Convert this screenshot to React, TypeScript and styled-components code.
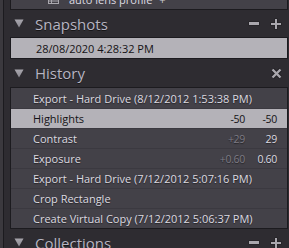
import React from "react";
import styled, { createGlobalStyle } from "styled-components";

const GlobalStyle = createGlobalStyle`
  html, body { margin: 0; padding: 0; background: #3b393e; }
  body { font-family: "Open Sans", "Noto Sans", sans-serif; width: 289px; height: 248px; overflow: hidden; }
`;

const Panel = styled.div`
  margin-left: 3px;
  border-left: 1px solid #1c1b1f;
  background: #2e2c31;
  height: 248px;
  overflow: hidden;
  padding: 0 1px 0 6px;
  display: flex;
  flex-direction: column;
`;

const Box = styled.div<{ $top?: number }>`
  background: #434148;
  border: 1px solid #1c1b1f;
  margin-top: ${(p) => p.$top ?? 0}px;
  display: flex;
  flex-direction: column;
`;

const Header = styled.div<{ $h: number }>`
  height: ${(p) => p.$h}px;
  display: flex;
  align-items: center;
  padding: 0 6px 0 4px;
  flex-shrink: 0;
`;

const Title = styled.span`
  margin-left: 11px;
  font-size: 15px;
  color: #b7b5c2;
  flex: 1;
  text-shadow: 0 1px 0 rgba(0, 0, 0, 0.5);
`;

const Tools = styled.div`
  display: flex;
  align-items: center;
  gap: 10px;
`;

const Row = styled.div<{ $sel?: boolean; $pad?: number }>`
  height: 20px;
  box-sizing: border-box;
  display: grid;
  grid-template-columns: 1fr 40px 32px;
  align-items: center;
  padding: 0 10px 0 ${(p) => p.$pad ?? 22}px;
  font-size: 11px;
  background: ${(p) => (p.$sel ? "#b4b2b8" : "transparent")};
  color: ${(p) => (p.$sel ? "#141216" : "#dcdae0")};
  text-shadow: ${(p) => (p.$sel ? "none" : "0 1px 1px rgba(0,0,0,0.45)")};
  & + & {
    border-top: 1px solid #3b3940;
  }
`;

const Label = styled.span`
  white-space: nowrap;
`;

const Val = styled.span<{ $dim?: boolean }>`
  text-align: right;
  font-size: 10.5px;
  letter-spacing: -0.3px;
  color: ${(p) => (p.$dim ? "#7d7b84" : "inherit")};
`;

const SnapBox = styled(Box)`
  background: #b4b2b8;
`;

const SnapRow = styled.div`
  height: 20px;
  display: flex;
  align-items: center;
  padding-left: 25px;
  font-size: 11px;
  color: #141216;
`;

const PresetRow = styled.div`
  height: 19px;
  display: flex;
  align-items: center;
  padding-left: 37px;
  font-size: 11px;
  color: #dcdae0;
  gap: 10px;
`;

const Plus2 = styled.span`
  margin-left: 7px;
  color: #c9c7cd;
`;

const Triangle = () => (
  <svg width="10" height="9" viewBox="0 0 10 9">
    <defs>
      <linearGradient id="tg" x1="0" y1="0" x2="0" y2="1">
        <stop offset="0" stopColor="#a9a7ae" />
        <stop offset="1" stopColor="#8a8890" />
      </linearGradient>
    </defs>
    <path d="M0.5 0.5 L9.5 0.5 L5 8.5 Z" fill="url(#tg)" />
  </svg>
);

const Minus = () => (
  <svg width="12" height="5" viewBox="0 0 12 5">
    <rect x="0.5" y="0.5" width="11" height="4" fill="#1e1d21" />
    <rect x="1" y="1" width="10" height="3" fill="#a9a7ad" />
  </svg>
);

const Plus = () => (
  <svg width="12" height="12" viewBox="0 0 12 12">
    <path d="M4.5 0.5h3v4h4v3h-4v4h-3v-4h-4v-3h4z" fill="#1e1d21" />
    <path d="M5 1h2v4h4v2h-4v4h-2v-4h-4v-2h4z" fill="#a9a7ad" />
  </svg>
);

const Close = () => (
  <svg width="11" height="11" viewBox="0 0 11 11">
    <path d="M1.5 1.5 L9.5 9.5 M9.5 1.5 L1.5 9.5" stroke="#1e1d21" strokeWidth="4" />
    <path d="M1.5 1.5 L9.5 9.5 M9.5 1.5 L1.5 9.5" stroke="#a9a7ad" strokeWidth="2.4" />
  </svg>
);

const PresetIcon = () => (
  <svg width="11" height="9" viewBox="0 0 11 9">
    <rect x="0.5" y="0.5" width="10" height="8" fill="none" stroke="#aaa8ae" />
    <path d="M0.5 3.5h10M0.5 6h10M3.5 0.5v8" stroke="#aaa8ae" />
  </svg>
);

const history: { label: string; a?: string; b?: string; sel?: boolean }[] = [
  { label: "Export - Hard Drive (8/12/2012 1:53:38 PM)" },
  { label: "Highlights", a: "-50", b: "-50", sel: true },
  { label: "Contrast", a: "+29", b: "29" },
  { label: "Exposure", a: "+0.60", b: "0.60" },
  { label: "Export - Hard Drive (7/12/2012 5:07:16 PM)" },
  { label: "Crop Rectangle" },
  { label: "Create Virtual Copy (7/12/2012 5:06:37 PM)" },
];

export default function App() {
  return (
    <>
      <GlobalStyle />
      <Panel>
        <Box $top={-11}>
          <PresetRow>
            <PresetIcon />
            <span>
              auto lens profile<Plus2>+</Plus2>
            </span>
          </PresetRow>
        </Box>
        <Header $h={27}>
          <Triangle />
          <Title>Snapshots</Title>
          <Tools>
            <Minus />
            <Plus />
          </Tools>
        </Header>
        <SnapBox>
          <SnapRow>28/08/2020 4:28:32 PM</SnapRow>
        </SnapBox>
        <Header $h={28}>
          <Triangle />
          <Title>History</Title>
          <Tools>
            <Close />
          </Tools>
        </Header>
        <Box>
          {history.map((h, i) => (
            <Row key={i} $sel={h.sel}>
              <Label>{h.label}</Label>
              <Val $dim={!h.sel}>{h.a ?? ""}</Val>
              <Val>{h.b ?? ""}</Val>
            </Row>
          ))}
        </Box>
        <Header $h={27}>
          <Triangle />
          <Title>Collections</Title>
          <Tools>
            <Minus />
            <Plus />
          </Tools>
        </Header>
      </Panel>
    </>
  );
}
